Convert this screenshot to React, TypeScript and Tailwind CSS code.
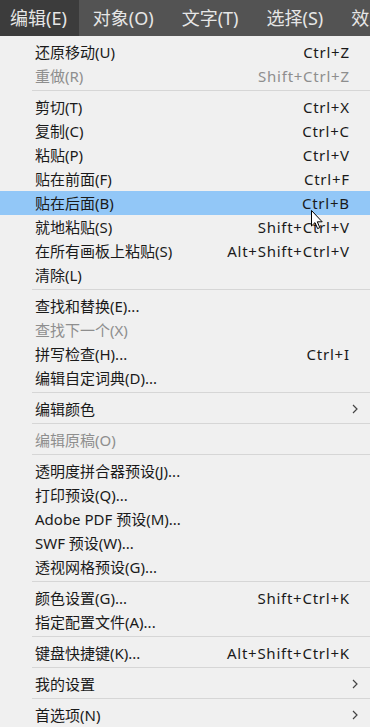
import React from "react";

type Item =
  | { type: "sep" }
  | { type: "item"; label: string; shortcut?: string; disabled?: boolean; sub?: boolean; active?: boolean };

const items: Item[] = [
  { type: "item", label: "还原移动(U)", shortcut: "Ctrl+Z" },
  { type: "item", label: "重做(R)", shortcut: "Shift+Ctrl+Z", disabled: true },
  { type: "sep" },
  { type: "item", label: "剪切(T)", shortcut: "Ctrl+X" },
  { type: "item", label: "复制(C)", shortcut: "Ctrl+C" },
  { type: "item", label: "粘贴(P)", shortcut: "Ctrl+V" },
  { type: "item", label: "贴在前面(F)", shortcut: "Ctrl+F" },
  { type: "item", label: "贴在后面(B)", shortcut: "Ctrl+B", active: true },
  { type: "item", label: "就地粘贴(S)", shortcut: "Shift+Ctrl+V" },
  { type: "item", label: "在所有画板上粘贴(S)", shortcut: "Alt+Shift+Ctrl+V" },
  { type: "item", label: "清除(L)" },
  { type: "sep" },
  { type: "item", label: "查找和替换(E)..." },
  { type: "item", label: "查找下一个(X)", disabled: true },
  { type: "item", label: "拼写检查(H)...", shortcut: "Ctrl+I" },
  { type: "item", label: "编辑自定词典(D)..." },
  { type: "sep" },
  { type: "item", label: "编辑颜色", sub: true },
  { type: "sep" },
  { type: "item", label: "编辑原稿(O)", disabled: true },
  { type: "sep" },
  { type: "item", label: "透明度拼合器预设(J)..." },
  { type: "item", label: "打印预设(Q)..." },
  { type: "item", label: "Adobe PDF 预设(M)..." },
  { type: "item", label: "SWF 预设(W)..." },
  { type: "item", label: "透视网格预设(G)..." },
  { type: "sep" },
  { type: "item", label: "颜色设置(G)...", shortcut: "Shift+Ctrl+K" },
  { type: "item", label: "指定配置文件(A)..." },
  { type: "sep" },
  { type: "item", label: "键盘快捷键(K)...", shortcut: "Alt+Shift+Ctrl+K" },
  { type: "sep" },
  { type: "item", label: "我的设置", sub: true },
  { type: "sep" },
  { type: "item", label: "首选项(N)", sub: true },
];

const font = { fontFamily: '"Noto Sans", "Noto Sans CJK SC", sans-serif' };

function Chevron() {
  return (
    <svg width="6" height="10" viewBox="0 0 6 10" className="block">
      <path d="M1 1 L5 5 L1 9" fill="none" stroke="#444" strokeWidth="1.2" />
    </svg>
  );
}

function Cursor() {
  return (
    <svg width="13" height="20" viewBox="0 0 13 20" className="absolute left-[311px] top-[210px]">
      <path
        d="M0.5 0.5 L0.5 16 L4 12.6 L6.6 18.6 L8.8 17.6 L6.3 11.8 L11.2 11.8 Z"
        fill="#fff"
        stroke="#000"
        strokeWidth="1"
        strokeLinejoin="round"
      />
    </svg>
  );
}

export default function App() {
  return (
    <div className="relative w-[370px] h-[727px] overflow-hidden bg-[#f0f0f0]" style={font}>
      <div className="flex h-[36px] bg-[#535353] text-[18px] text-[#e6e6e6] items-stretch overflow-hidden whitespace-nowrap">
        <div className="flex items-center pl-[10px] pr-[12px] bg-[#3c3c3c] shrink-0">编辑(E)</div>
        <div className="flex items-center px-[14px] shrink-0">对象(O)</div>
        <div className="flex items-center px-[14px] shrink-0">文字(T)</div>
        <div className="flex items-center px-[14px] shrink-0">选择(S)</div>
        <div className="flex items-center px-[14px] shrink-0">效果(C)</div>
      </div>
      <div className="flex flex-col pt-[4px] text-[15px]">
        {items.map((it, i) =>
          it.type === "sep" ? (
            <div key={i} className="h-[7px] flex flex-col pl-[32px] pt-[2px]">
              <div className="h-px bg-[#d6d6d6]" />
            </div>
          ) : (
            <div
              key={i}
              className={
                "h-[24px] flex items-center pl-[35px] pr-[21px] " +
                (it.active ? "bg-[#92c7f7] " : "") +
                (it.disabled ? "text-[#8e8e8e]" : "text-[#1a1a1a]")
              }
            >
              <span className="flex-1 whitespace-nowrap">{it.label}</span>
              {it.shortcut && (
                <span className="whitespace-nowrap tracking-[0.75px] mr-[-0.75px]">{it.shortcut}</span>
              )}
              {it.sub && (
                <span className="mr-[-9px]">
                  <Chevron />
                </span>
              )}
            </div>
          )
        )}
      </div>
      <Cursor />
    </div>
  );
}
